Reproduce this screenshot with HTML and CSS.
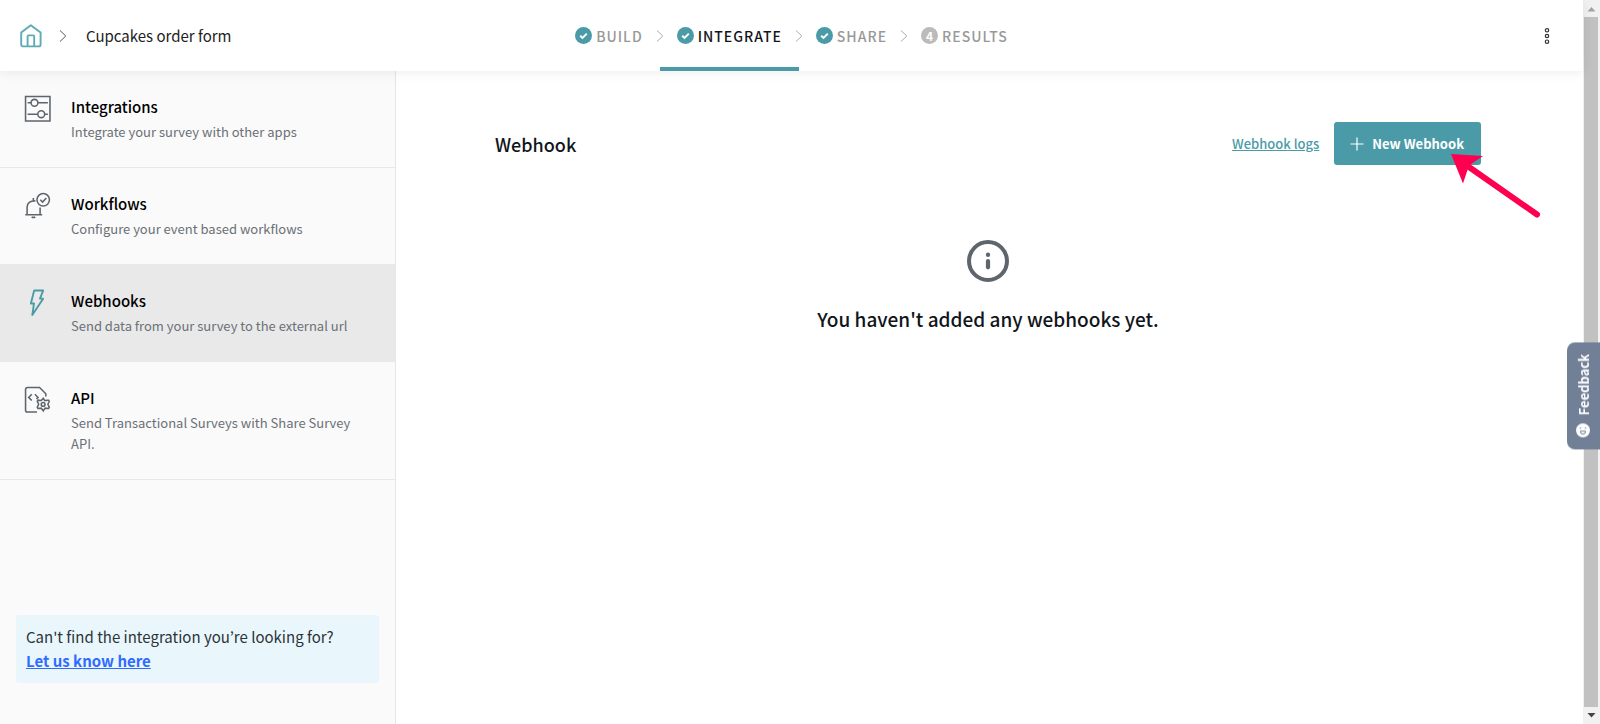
FILE: index.html
```html
<!DOCTYPE html>
<html lang="en">
<head>
<meta charset="utf-8">
<title>Cupcakes order form - Webhooks</title>
<link rel="stylesheet" href="styles.css">
</head>
<body>
<div class="window">
  <div class="page">
    <header class="topbar">
      <nav class="breadcrumb" aria-label="Breadcrumb">
        <a class="home" href="#" aria-label="Home">
          <svg width="22" height="24" viewBox="0 0 22 24" fill="none" stroke="currentColor" stroke-width="1.9" stroke-linejoin="round"><path d="M1.200 8.600 10.800 1.200 20.600 8.600V20.400a2 2 0 0 1-2 2H3.200a2 2 0 0 1-2-2Z"/><path d="M7.600 22.400V12.400a1 1 0 0 1 1-1H13.200a1 1 0 0 1 1 1V22.400"/></svg>
        </a>
        <svg class="crumb-arrow" width="8" height="14" viewBox="0 0 8 14" fill="none" stroke="currentColor"><path d="M1 1.500 6.800 7 1 12.500"/></svg>
        <span class="survey-name">Cupcakes order form</span>
      </nav>
      <nav class="steps" aria-label="Survey steps">
        <a class="step" href="#"><svg class="badge" viewBox="0 0 17 17"><circle cx="8.500" cy="8.500" r="8.500"/><path d="m5.200 8.700 2.300 2.200 4.300-4.300"/></svg>BUILD</a>
        <a class="step active" href="#" aria-current="step"><svg class="divider" viewBox="0 0 8 12"><path d="M1 .5 6.800 6 1 11.500"/></svg><svg class="badge" viewBox="0 0 17 17"><circle cx="8.500" cy="8.500" r="8.500"/><path d="m5.200 8.700 2.300 2.200 4.300-4.300"/></svg>INTEGRATE</a>
        <a class="step" href="#"><svg class="divider" viewBox="0 0 8 12"><path d="M1 .5 6.800 6 1 11.500"/></svg><svg class="badge" viewBox="0 0 17 17"><circle cx="8.500" cy="8.500" r="8.500"/><path d="m5.200 8.700 2.300 2.200 4.300-4.300"/></svg>SHARE</a>
        <a class="step" href="#"><svg class="divider" viewBox="0 0 8 12"><path d="M1 .5 6.800 6 1 11.500"/></svg><span class="number">4</span>RESULTS</a>
      </nav>
      <button class="more" type="button" aria-label="More options">
        <svg width="6" height="18" viewBox="0 0 6 18" fill="none" stroke="currentColor" stroke-width="1.200"><circle cx="3" cy="3.300" r="1.700"/><circle cx="3" cy="9" r="1.700"/><circle cx="3" cy="14.700" r="1.700"/></svg>
      </button>
    </header>

    <div class="body">
      <aside class="sidebar">
        <nav class="menu" aria-label="Integrate">
          <a class="item" href="#">
            <svg class="icon" viewBox="0 0 26 26"><path d="M1.500 1.500H25V25H1.500Z"/><path d="M3.500 7.500H6.800M13.400 7.500H23M3.500 18.500H13.300M19.900 18.500H23"/><circle cx="10.100" cy="7.500" r="3.300"/><circle cx="16.600" cy="18.500" r="3.300"/></svg>
            <span class="label"><span class="title">Integrations</span><span class="desc">Integrate your survey with other apps</span></span>
          </a>
          <a class="item" href="#">
            <svg class="icon" viewBox="0 0 26 26"><circle cx="18.500" cy="7.500" r="6"/><path d="m15.700 7.500 2.200 2.200 3.600-4"/><path d="M11 8.600C6 8.200 3 10.900 3 14.500V21.700M15.500 15V21.700M1.200 21.900H17.500M9 8.500V5.700M7.500 23.800a1.800 1.500 0 0 0 3.200 0"/></svg>
            <span class="label"><span class="title">Workflows</span><span class="desc">Configure your event based workflows</span></span>
          </a>
          <a class="item selected" href="#" aria-current="page">
            <svg class="icon" viewBox="0 0 26 26"><path d="M9.800 1.500H18.400L15.400 9.300H18.400L8 25 9.600 14H6.600Z"/></svg>
            <span class="label"><span class="title">Webhooks</span><span class="desc">Send data from your survey to the external url</span></span>
          </a>
          <a class="item" href="#">
            <svg class="icon" viewBox="0 0 26 26"><path d="M12.500 25H3.200A1.700 1.700 0 0 1 1.500 23.300V3.200A1.700 1.700 0 0 1 3.200 1.500H15L21 7.500V10M7.500 8 4.500 11l3 3M10.500 8l3 3-1.500 1.500"/><path d="m18.500 11.800 1.600 2.300 2.700-.3 1-.1.500 1-1.300 2.900 1.300 2.800-.6 1.200-3.300-.3-1.900 2.600-1.900-2.600-3.200.3-.6-1.200 1.300-2.800-1.300-2.900.6-1.100 3.300.4Z"/><circle cx="18.400" cy="17.700" r="1.800"/></svg>
            <span class="label"><span class="title">API</span><span class="desc">Send Transactional Surveys with Share Survey API.</span></span>
          </a>
        </nav>
        <div class="hint">
          <p>Can't find the integration you’re looking for?</p>
          <a href="#">Let us know here</a>
        </div>
      </aside>

      <main class="content">
        <div class="heading">
          <h1>Webhook</h1>
          <div class="actions">
            <a class="logs" href="#">Webhook logs</a>
            <button class="new" type="button">
              <svg width="14" height="14" viewBox="0 0 14 14" stroke="currentColor" stroke-width="1.200"><path d="M7 .5V13.500M.5 7H13.500"/></svg>
              New Webhook
            </button>
            <svg class="pointer" width="92" height="66" viewBox="0 0 92 66" aria-hidden="true"><path d="M18 13 86 60.500" fill="none" stroke="#ff0050" stroke-width="6" stroke-linecap="round"/><path d="M0 0 32 2 18 11.500 12 29.500Z" fill="#ff0050"/></svg>
          </div>
        </div>
        <section class="empty">
          <svg width="42" height="42" viewBox="0 0 42 42"><circle cx="21" cy="21" r="19" fill="none" stroke="#5f656d" stroke-width="4"/><circle cx="21" cy="14.800" r="2.200" fill="#5f656d"/><rect x="18.900" y="19" width="4.200" height="10.400" rx="2.100" fill="#5f656d"/></svg>
          <p>You haven't added any webhooks yet.</p>
        </section>
      </main>
    </div>
  </div>

  <div class="scrollbar" aria-hidden="true">
    <svg class="up" viewBox="0 0 17 17"><path d="M4.500 11.500h8L8.500 7Z"/></svg>
    <div class="thumb"></div>
    <svg class="down" viewBox="0 0 17 17"><path d="M4.500 6h8L8.500 10.500Z"/></svg>
  </div>
  <button class="feedback" type="button">
    <svg width="14" height="14" viewBox="0 0 14 14"><circle cx="7" cy="7" r="7" fill="#fff"/><g fill="none" stroke="#728097" transform="rotate(180 7 7)"><path d="M4.500 7.800h5c0 2-1 3-2.500 3s-2.500-1-2.500-3Z"/><path d="M3.800 4.800h1.500M8.700 4.800h1.500"/></g></svg>
    Feedback
  </button>
</div>
</body>
</html>
```

FILE: styles.css
```css
* {
  box-sizing: border-box;
}

body {
  margin: 0;
  background: #fff;
  color: #11151a;
  font-family: "Noto Sans CJK KR", "Noto Sans", sans-serif;
  font-size: 14px;
}

a {
  color: inherit;
  text-decoration: none;
}

button {
  border: 0;
  font: inherit;
  cursor: pointer;
}

h1,
p {
  margin: 0;
}

svg {
  display: block;
  flex: none;
}

.window {
  display: flex;
  min-height: 100vh;
}

.page {
  flex: 1;
  display: flex;
  flex-direction: column;
}

/* Top bar */

.topbar {
  position: relative;
  z-index: 1;
  display: grid;
  grid-template-columns: 1fr auto 1fr;
  height: 71px;
  background: #fff;
  box-shadow: 0 1px 12px rgba(0, 0, 0, 0.08);
}

.breadcrumb {
  display: flex;
  align-items: center;
  padding-left: 20px;
}

.home {
  color: #5dabb5;
}

.crumb-arrow {
  margin: 0 19px 0 17px;
  color: #555;
}

.survey-name {
  font-size: 15px;
  color: #222;
}

.steps {
  display: flex;
}

.step {
  position: relative;
  display: flex;
  align-items: center;
  gap: 4px;
  padding: 0 17px;
  font-size: 14px;
  font-weight: 500;
  letter-spacing: 1px;
  color: #999;
}

.step.active {
  color: #11151a;
  box-shadow: inset 0 -4px #4a9ba7;
}

.badge {
  width: 17px;
  height: 17px;
  fill: #4a9ba7;
}

.badge path {
  fill: none;
  stroke: #fff;
  stroke-width: 2;
}

.number {
  width: 17px;
  border-radius: 50%;
  background: #bbb;
  color: #fff;
  font-size: 12px;
  font-weight: 700;
  line-height: 17px;
  letter-spacing: 0;
  text-align: center;
}

.divider {
  position: absolute;
  left: -4px;
  width: 8px;
  height: 12px;
  fill: none;
  stroke: #aaa;
}

.more {
  justify-self: end;
  padding: 0 33px;
  background: none;
  color: #333;
}

/* Sidebar */

.body {
  flex: 1;
  display: flex;
}

.sidebar {
  width: 396px;
  display: flex;
  flex-direction: column;
  justify-content: space-between;
  padding-bottom: 41px;
  border-right: 1px solid #e6e6e6;
  background: #fafafa;
}

.item {
  display: flex;
  gap: 20px;
  padding: 24px 40px 25px 24px;
  border-bottom: 1px solid #e8e8e8;
}

.item.selected {
  background: #e9e9e9;
}

.icon {
  width: 27px;
  height: 27px;
  fill: none;
  stroke: #5f656d;
  stroke-width: 1.5;
}

.selected .icon {
  stroke: #4a9ba7;
  stroke-width: 1.8;
  stroke-linejoin: round;
}

.label {
  display: flex;
  flex-direction: column;
  gap: 2px;
}

.title {
  font-size: 15px;
  font-weight: 500;
  line-height: 24px;
  color: #000;
}

.desc {
  font-size: 13px;
  line-height: 21px;
  color: #6b7076;
}

.hint {
  margin: 0 16px;
  padding: 10px;
  border-radius: 3px;
  background: #e9f7fc;
  font-size: 15px;
  line-height: 24px;
  color: #2c3338;
}

.hint a {
  color: #2f6bff;
  font-weight: 700;
  text-decoration: underline;
}

/* Content */

.content {
  flex: 1;
  padding: 51px 102px 0 99px;
}

.heading,
.actions {
  display: flex;
  align-items: center;
}

.heading {
  justify-content: space-between;
}

h1 {
  font-size: 18px;
  font-weight: 500;
}

.actions {
  position: relative;
  gap: 15px;
}

.logs {
  color: #4a9ba7;
  font-size: 13px;
  font-weight: 500;
  text-decoration: underline;
}

.new {
  display: flex;
  align-items: center;
  gap: 8px;
  height: 43px;
  padding: 0 17px 0 16px;
  border-radius: 3px;
  background: #4a9ba7;
  color: #fff;
  font-size: 13px;
  font-weight: 700;
}

.pointer {
  position: absolute;
  top: 32px;
  right: -62px;
}

.empty {
  display: flex;
  flex-direction: column;
  align-items: center;
  gap: 24px;
  padding-top: 75px;
  font-size: 19px;
  font-weight: 500;
  line-height: 26px;
}

/* Scrollbar */

.scrollbar {
  display: flex;
  flex-direction: column;
  width: 17px;
  background: #f1f1f1;
}

.thumb {
  flex: 1;
  margin: 0 2px 0 1px;
  background: #c1c1c1;
}

.up {
  fill: #a3a3a3;
}

.down {
  fill: #444;
}

/* Feedback tab */

.feedback {
  position: fixed;
  z-index: 2;
  right: 0;
  top: 342px;
  display: flex;
  align-items: center;
  gap: 8px;
  width: 33px;
  padding: 12px 0;
  border-radius: 0 8px 8px 0;
  background: #728097;
  color: #fff;
  font-size: 13px;
  font-weight: 700;
  writing-mode: vertical-rl;
  transform: rotate(180deg);
}
```
